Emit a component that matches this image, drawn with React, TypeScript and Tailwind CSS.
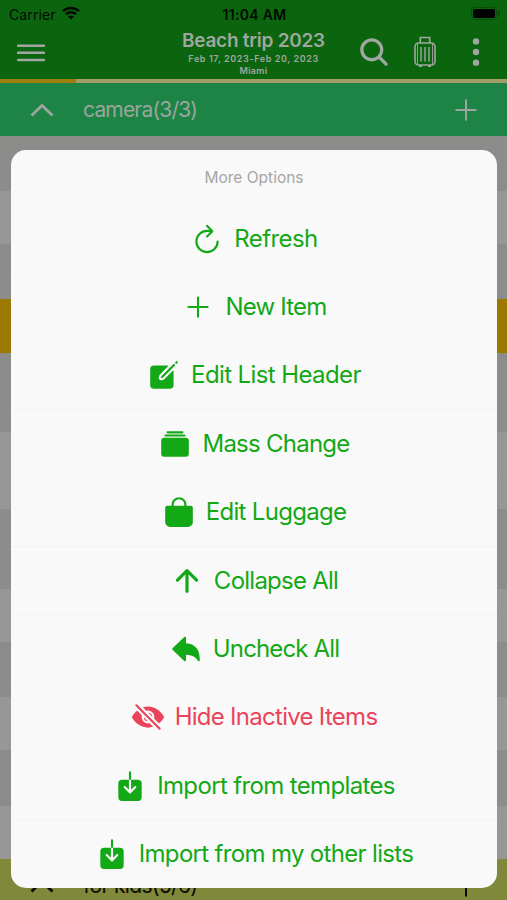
import type { IconType } from "react-icons";
import {
  IoAdd, IoAlbums, IoArrowUndo, IoArrowUp, IoBag, IoCreate, IoDownload,
  IoEyeOff, IoRefreshOutline, IoSearch, IoEllipsisVertical,
} from "react-icons/io5";

type Option = { label: string; icon: IconType; tone?: string; tracking: string; line: string };

const options: Option[] = [
  { label: "Refresh", icon: IoRefreshOutline, tracking: "tracking-[-0.6px]", line: "border-[#f7f7f7]" },
  { label: "New Item", icon: IoAdd, tracking: "tracking-[-0.8px]", line: "border-[#f8f8f8]" },
  { label: "Edit List Header", icon: IoCreate, tracking: "tracking-[-0.6px]", line: "border-[#f8f8f8]" },
  { label: "Mass Change", icon: IoAlbums, tracking: "tracking-[-0.75px]", line: "border-[#f2f2f2]" },
  { label: "Edit Luggage", icon: IoBag, tracking: "tracking-[-0.7px]", line: "border-[#f5f5f5]" },
  { label: "Collapse All", icon: IoArrowUp, tracking: "tracking-[-0.75px]", line: "border-[#f2f2f2]" },
  { label: "Uncheck All", icon: IoArrowUndo, tracking: "tracking-[-0.85px]", line: "border-[#f2f2f2]" },
  { label: "Hide Inactive Items", icon: IoEyeOff, tone: "text-[#ea445a]", tracking: "tracking-[-0.72px]", line: "border-[#f5f5f5]" },
  { label: "Import from templates", icon: IoDownload, tracking: "tracking-[-0.64px]", line: "border-[#f6f6f6]" },
  { label: "Import from my other lists", icon: IoDownload, tracking: "tracking-[-0.67px]", line: "border-[#f3f3f3]" },
];

function Chevron() {
  return (
    <svg className="h-[14px] w-[24px]" viewBox="0 0 24 14" fill="none" stroke="currentColor" strokeWidth="2.8">
      <path d="M1.5 12.5 12 2.5l10.5 10" />
    </svg>
  );
}

function Suitcase() {
  return (
    <svg className="h-[32px] w-[22px]" viewBox="0 0 22 32" fill="none" stroke="currentColor" strokeWidth="1.6">
      <path d="M6.300 7V1.500h9.400V7" />
      <rect x="1" y="7" width="20" height="22" rx="3.500" />
      <path d="M3.500 8v20M18.500 8v20" strokeWidth="0.900" />
      <path d="M7 11v14.500M11 11v14.500M15 11v14.500" strokeWidth="1.400" />
      <path d="M5 30.200h3M14 30.200h3" strokeWidth="1.800" />
    </svg>
  );
}

function StatusBar() {
  return (
    <div className="grid h-[28px] grid-cols-3 items-center pl-[9px] pr-[7px] text-[14px] text-[#020a02]">
      <div className="flex items-center gap-[6px]">
        <span className="tracking-[0.1px]">Carrier</span>
        <svg className="mb-[2px] h-[14px] w-[18px]" viewBox="0 0 18 14" fill="none" stroke="currentColor" strokeWidth="2.5">
          <path d="M1 5.200c4.400-4.300 11.600-4.300 16 0M3.900 8.200c2.800-2.700 7.400-2.700 10.200 0" />
          <path d="M9 13.600 6 10.600c1.700-1.500 4.300-1.500 6 0z" fill="currentColor" stroke="none" />
        </svg>
      </div>
      <span className="text-center font-semibold tracking-[0.3px]">11:04 AM</span>
      <div className="mb-[2px] flex items-center justify-end">
        <div className="h-[13px] w-[26px] rounded-[4px] border border-[#084d0a] p-px">
          <div className="h-full rounded-[2px] bg-black" />
        </div>
        <div className="ml-px h-[5px] w-[2px] rounded-r bg-[#084d0a]" />
      </div>
    </div>
  );
}

export default function App() {
  return (
    <div className="relative flex h-[900px] w-[507px] flex-col overflow-hidden bg-[#979797] font-['Inter',sans-serif]">
      <header className="h-[79px] shrink-0 bg-[#0a650e]">
        <StatusBar />
        <div className="grid h-[51px] grid-cols-[140px_1fr_140px] text-[#a0a7a0]">
          <div className="pl-[17px] pt-[15px]">
            <svg className="h-[20px] w-[28px]" viewBox="0 0 28 20" stroke="currentColor" strokeWidth="2.500" strokeLinecap="round">
              <path d="M1 2.700h26M1 9.800h26M1 17h26" />
            </svg>
          </div>
          <div className="flex flex-col items-center whitespace-nowrap font-semibold">
            <h1 className="text-[19px] leading-[25px] tracking-[-0.25px]">Beach trip 2023</h1>
            <p className="text-[9px] leading-[12px] tracking-[0.600px]">Feb 17, 2023-Feb 20, 2023</p>
            <p className="text-[9px] leading-[12px] tracking-[0.3px]">Miami</p>
          </div>
          <div className="flex items-center pb-[3px] pr-[14px]">
            <IoSearch className="ml-[-10px] h-[34px] w-[34px]" />
            <div className="ml-[23px]"><Suitcase /></div>
            <IoEllipsisVertical className="ml-[23px] h-[34px] w-[34px]" />
          </div>
        </div>
      </header>
      <div className="flex h-[4px] shrink-0 bg-[#a29d67]">
        <div className="w-[76px] bg-[#9c7f0b]" />
      </div>
      <section className="flex h-[53px] shrink-0 items-center bg-[#1d8446] pl-[30px] pr-[30px] text-[#9ca59f]">
        <Chevron />
        <span className="ml-[29px] text-[21px] tracking-[-0.82px]">camera(3/3)</span>
        <svg className="ml-auto h-[22px] w-[22px]" viewBox="0 0 22 22" stroke="currentColor" strokeWidth="2">
          <path d="M11 .5v21M.5 11h21" />
        </svg>
      </section>
      <div className="h-[55px] shrink-0 bg-[#8c8c8a]" />
      <div className="h-[53px] shrink-0 bg-[#979797]" />
      <div className="h-[55px] shrink-0 bg-[#8c8c8a]" />
      <div className="h-[54px] shrink-0 bg-[#9b7900]" />
      <div className="h-[79px] shrink-0 bg-[#8c8c8a]" />
      <div className="h-[77px] shrink-0 bg-[#979797]" />
      <div className="h-[80px] shrink-0 bg-[#8c8c8a]" />
      <div className="h-[53px] shrink-0 bg-[#979797]" />
      <div className="h-[55px] shrink-0 bg-[#8c8c8a]" />
      <div className="h-[53px] shrink-0 bg-[#979797]" />
      <div className="h-[56px] shrink-0 bg-[#8c8c8a]" />
      <div className="h-[53px] shrink-0 bg-[#979797]" />
      <section className="flex h-[53px] shrink-0 items-center bg-[#80893a] pl-[30px] pr-[30px] text-[#080a02]">
        <Chevron />
        <span className="ml-[29px] text-[21px] tracking-[-0.65px]">for kids(5/6)</span>
        <svg className="ml-auto h-[22px] w-[22px]" viewBox="0 0 22 22" stroke="currentColor" strokeWidth="2">
          <path d="M11 .5v21M.5 11h21" />
        </svg>
      </section>

      <div className="absolute left-[11px] top-[150px] flex h-[738px] w-[486px] flex-col overflow-hidden rounded-[15px] bg-[#f9f9f9]">
        <div className="flex h-[54px] shrink-0 items-center justify-center pt-[2px] text-[15.500px] text-[#a5a5a5]">More Options</div>
        {options.map(({ label, icon: Icon, tone, tracking, line }) => (
          <button
            key={label}
            className={`flex h-[68.400px] shrink-0 items-center justify-center gap-[10px] border-t ${line} ${tone ?? "text-[#13a816]"}`}
          >
            <Icon className="h-[34px] w-[34px] shrink-0" />
            <span className={`whitespace-nowrap text-[24px] leading-8 ${tracking}`}>{label}</span>
          </button>
        ))}
      </div>
    </div>
  );
}
